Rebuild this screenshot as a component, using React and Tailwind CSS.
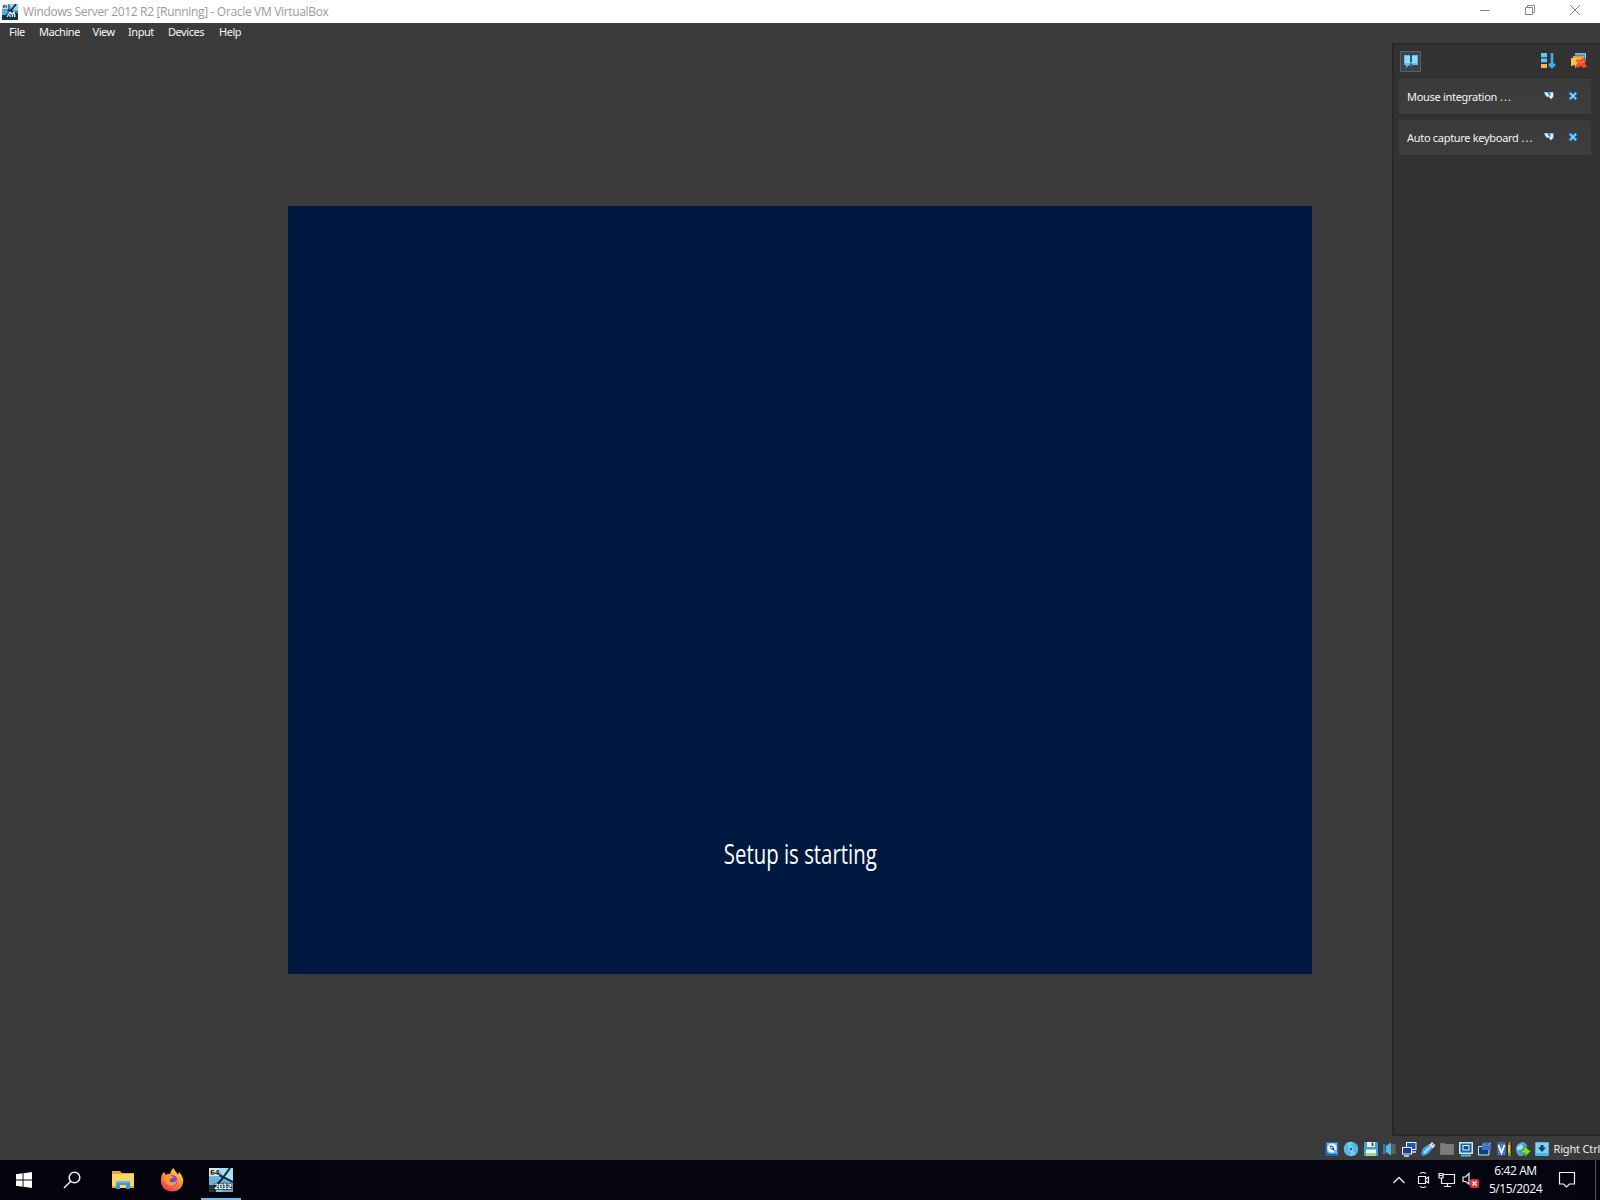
import React from "react";

const TRAY_TEXT = "font-['Open_Sans','Noto_Sans',sans-serif]";

function VmIcon({ className }) {
  return (
    <svg viewBox="0 0 24 24" className={className}>
      <rect width="24" height="24" fill="#7cc4e4" />
      <path d="M10 0H24V13L15 9Z" fill="#a9dff2" />
      <path d="M0 9L9 8L12 14L0 20Z" fill="#65b3d8" />
      <path d="M13 12L24 15V24H13Z" fill="#5aa9d2" />
      <path d="M0 17H7V24H0Z" fill="#26363c" />
      <path d="M10 7L24 14M21 0L13 11L5 20" stroke="#10283c" strokeWidth="2" fill="none" />
      <rect width="10" height="8" fill="#dfe9e6" />
      <text x="1" y="7" fontSize="7" fontWeight="700" fontFamily="DejaVu Sans" fill="#222">64</text>
      <text x="5" y="21" fontSize="7.5" fontWeight="700" fontFamily="DejaVu Sans" fill="#fff" stroke="#14222c" strokeWidth="1.2" paintOrder="stroke" textLength="18">2012</text>
    </svg>
  );
}

function TitleIcon() {
  return (
    <svg viewBox="0 0 16 16" className="size-4">
      <rect width="16" height="16" fill="#2e86b8" />
      <path d="M7 0H16V7L10 6Z" fill="#8fd3ee" />
      <path d="M0 5L6 6L4 11L0 12Z" fill="#4fb0d8" />
      <path d="M0 11H16V16H0Z" fill="#123650" />
      <path d="M14 0L8 8L3 14M6 6L16 11" stroke="#0b2438" strokeWidth="1.6" />
      <rect width="6" height="5" fill="#d8e3e2" />
      <path d="M1.5 1.5H3V3.500H1.500ZM4 1V3H5.500" stroke="#333" strokeWidth=".8" fill="none" />
      <path d="M5 13L8 8L10 10L12 8L13 13M8 13V11M10.500 13V11" stroke="#e8f6fc" strokeWidth="1.3" fill="none" />
    </svg>
  );
}

const STATUS_ICONS = [
  <g key="hdd">
    <rect x="1.500" y="1" width="13" height="14" rx="1" fill="#1c6fba" />
    <path d="M3 2H13V13H3Z" fill="#6cbcea" />
    <circle cx="8" cy="7" r="4.600" fill="#eef8fd" />
    <path d="M5.500 4.500L9 5L10.500 8.500L12 11L9 9L6.500 8Z" fill="#245a94" />
    <circle cx="7.500" cy="6.500" r="1.100" fill="#c3e5f6" />
    <path d="M3 12L5 13.500H12" stroke="#1a5da2" strokeWidth="1.500" fill="none" />
  </g>,
  <g key="disc">
    <circle cx="8" cy="8" r="7.300" fill="#52b6e6" />
    <path d="M8 8L3 2.700A7 7 0 0 1 9 1ZM8 8L13 13A7 7 0 0 1 7 15Z" fill="#72c9ef" />
    <circle cx="8" cy="8" r="2.500" fill="#8ad6f4" />
    <circle cx="8" cy="8" r="1.300" fill="#155d96" />
  </g>,
  <g key="floppy">
    <path d="M1 1H14L15 2V15H1Z" fill="#3e9fdb" />
    <rect x="4" y="1" width="8" height="5" fill="#eef8fc" />
    <rect x="8.500" y="1.500" width="2" height="3.500" fill="#1d5a91" />
    <rect x="3" y="8.500" width="10" height="6" fill="#f3faee" />
    <rect x="3" y="12" width="10" height="2.500" fill="#a5d87a" />
  </g>,
  <g key="audio">
    <path d="M1 3H3.500V13H1Z" fill="#2d7dbd" />
    <path d="M4 5L9 1.500V14.500L4 11Z" fill="#57b8ea" />
    <path d="M9 3H14V13H9Z" fill="#56595b" />
    <path d="M11 3V13" stroke="#6c6f70" />
  </g>,
  <g key="network">
    <rect x="5.500" y="1.500" width="9.500" height="7" fill="#1b58b4" stroke="#eaf2fb" />
    <rect x="1.500" y="6.500" width="9" height="6.500" fill="#173f8c" stroke="#eaf2fb" />
    <path d="M3 15H8M11 11H15" stroke="#dce9f6" strokeWidth="1.500" />
  </g>,
  <g key="usb">
    <path d="M1 13L3 7L9 3L13 7L8 13L3 15Z" fill="#3e9cdc" />
    <path d="M3 11L9 5L11 7L5 13Z" fill="#92d8f8" />
    <path d="M9 4L12 1L15.500 4.500L12.500 7.500Z" fill="#f0d9df" />
    <path d="M12 3L13.500 4.500" stroke="#9c5c72" />
  </g>,
  <g key="folder">
    <path d="M1 2H6L7 3H15V14H1Z" fill="#707070" />
    <path d="M2 3H14V13H2Z" fill="#7c7c7c" />
  </g>,
  <g key="display">
    <rect x="1" y="1" width="14" height="12" fill="#c6e8f8" />
    <rect x="2.500" y="2.500" width="11" height="9" fill="#1763a8" />
    <rect x="5" y="4.500" width="6" height="4.500" fill="#1c4f7d" stroke="#e8f6fc" />
    <path d="M3 14.500H13" stroke="#65b9e6" strokeWidth="2" />
  </g>,
  <g key="recording">
    <path d="M1.500 5.500H12V14H1.500Z" fill="#123f83" stroke="#d2e5f8" />
    <path d="M5 3L7 1.500H14V9H5Z" fill="#3f72c4" />
    <path d="M7 2V5M14 2L11 4" stroke="#7ba4e2" />
  </g>,
  <g key="cpu">
    <path d="M1 2H10V14H1Z" fill="#315fae" />
    <path d="M3 1V15M5.500 1V15M8 1V15" stroke="#8aabe0" strokeDasharray="1 1" />
    <path d="M2.500 4L5.500 12L8.500 4" stroke="#eef4fd" strokeWidth="2" fill="none" />
    <rect x="11" y="1" width="5" height="14" fill="#252923" />
    <rect x="12" y="1" width="2.500" height="14" fill="#d9ca28" />
    <rect x="12" y="1" width="2.500" height="3" fill="#c15a25" />
    <rect x="12" y="12" width="2.500" height="3" fill="#4fae35" />
  </g>,
  <g key="mouse">
    <path d="M1 8C1 3 5 1 9 1L12 4V10L8 15H4C2 13 1 11 1 8Z" fill="#4fa3d7" />
    <path d="M2 6L6 3L9 6L6 9H2Z" fill="#a0dcf5" />
    <path d="M6 9L9 9V5L15.500 10.500L10 15.500V12H6Z" fill="#8adc2d" stroke="#348b27" strokeWidth=".7" />
  </g>,
  <g key="keyboard">
    <rect x="1" y="1" width="14" height="14" rx="1" fill="#49b3e8" />
    <rect x="2" y="2" width="12" height="10" fill="#80d0f3" />
    <path d="M6.500 4H9.500V6.500H12L8 11L4 6.500H6.500Z" fill="#0c3c68" />
  </g>,
];

const MENU = [
  ["File", "w-[30px]"],
  ["Machine", "w-[53.500px]"],
  ["View", "w-[35.500px]"],
  ["Input", "w-[40px]"],
  ["Devices", "w-[51px]"],
  ["Help", "w-[40px]"],
];

function TitleBar() {
  return (
    <header className="flex h-[23px] shrink-0 items-center bg-white pl-[2px]">
      <TitleIcon />
      <h1 className="ml-[5px] mt-[1px] flex-1 whitespace-nowrap font-['Open_Sans','Noto_Sans',sans-serif] text-[12px] leading-4 tracking-[-0.330px] text-[#9b9b9b]">
        Windows Server 2012 R2 [Running] - Oracle VM VirtualBox
      </h1>
      <div className="flex items-center gap-[33.500px] pb-[4px] pr-[19px]">
        <svg viewBox="0 0 10 12" className="h-3 w-[10px]"><path d="M0 6.500H10" stroke="#8a8a8a" /></svg>
        <svg viewBox="0 0 12 12" className="size-3" fill="none" stroke="#858585">
          <path d="M1.500 3.500H8.500V10.500H1.500ZM3.500 3.500V1.500H10.500V8.500H8.500" />
        </svg>
        <svg viewBox="0 0 12 12" className="size-3"><path d="M1 1L11 11M11 1L1 11" stroke="#858585" /></svg>
      </div>
    </header>
  );
}

function Notice({ children }) {
  return (
    <div className="flex h-[35px] items-center bg-linear-to-b from-[#3a3a3a] to-[#3e3e3e] pl-[8px]">
      <span className="mt-[2px] flex w-[137px] gap-[3px] whitespace-nowrap font-['Noto_Sans','Open_Sans',sans-serif] text-[11px] text-[#f4f4f4]">
        <span className="tracking-[-0.300px]">{children}</span>
        <span className="tracking-[1px]">...</span>
      </span>
      <svg viewBox="0 0 10 10" className="mb-[2px] size-[10px]">
        <path d="M0 1H4L5 2L6 1H9.500V6L7 8.500L5 6L3 6L1 4Z" fill="#6ebee9" />
        <path d="M1.500 2L4.500 5M8 2V5L6 7" stroke="#f6fcff" strokeWidth="1.800" fill="none" />
        <path d="M4 2L6 4" stroke="#1a5a8e" />
      </svg>
      <svg viewBox="0 0 10 10" className="mb-[2px] ml-[14px] size-[10px]">
        <path d="M1.500 1.500L8.500 8.500M8.500 1.500L1.500 8.500" stroke="#1d76b8" strokeWidth="3.200" />
        <path d="M2 2L8 8M8 2L2 8" stroke="#8ad8ff" strokeWidth="1.700" />
      </svg>
    </div>
  );
}

function NotificationCenter() {
  return (
    <aside className="flex w-[208px] shrink-0 flex-col border-b-2 border-l-2 border-t-2 border-[#282828] bg-[#323232] pl-[5px] pr-[9px]">
      <div className="flex h-[34px] items-center pb-[2px] pl-[1px]">
        <div className="flex size-[21px] items-center justify-center border border-[#5c6058] bg-[#39474d]">
          <svg viewBox="0 0 16 16" className="size-4">
            <path d="M1 2H7L8 3L9 2H15V12H9L8 13L6 12L3 15V12H1Z" fill="#5ebcf0" />
            <path d="M2 3H7V10H2ZM9 3H14V10H9Z" fill="#91dcff" />
            <path d="M8 2V9M8 10.500V12" stroke="#143849" strokeWidth="1.500" />
          </svg>
        </div>
        <svg viewBox="0 0 16 16" className="ml-[119px] size-4">
          <path d="M1 0H7V4H1ZM1 5.500H7V9H1Z" fill="#68c6f6" />
          <path d="M1 4.500H7M1 9.500H7" stroke="#1769a6" />
          <path d="M1 11H7V15H1Z" fill="#f4b54d" />
          <path d="M12 0V14M9 11L12 14L15 11" stroke="#42aceb" strokeWidth="2.600" fill="none" />
        </svg>
        <svg viewBox="0 0 18 16" className="ml-[14px] h-4 w-[18px]">
          <path d="M5 0H16V8H13V3H5Z" fill="#388bc4" />
          <path d="M5 1H15.500V5" stroke="#a0dcf5" fill="none" />
          <path d="M3 3H14V12H3Z" fill="#ef9c32" />
          <path d="M1 5H12V12L9 11L5 15V12L1 13Z" fill="#f7c34e" />
          <path d="M7 6L10 7L13 5L16 8L15 10L17 14L13 15L11 13L7 15L6 12L8 10L6 8Z" fill="#ef4f28" />
          <path d="M8 8L11 10L14 8" stroke="#ff9964" fill="none" />
        </svg>
      </div>
      <div className="flex flex-col gap-[6px]">
        <Notice>Mouse integration</Notice>
        <Notice>Auto capture keyboard</Notice>
      </div>
    </aside>
  );
}

function Taskbar() {
  return (
    <footer className="flex h-10 shrink-0 items-stretch bg-linear-to-r from-[#02030b] via-[#090612] to-[#030410] text-white">
      <div className="flex w-12 items-center justify-center">
        <svg viewBox="0 0 16 16" className="size-4" fill="#fff">
          <path d="M0 2.300L6.600 1.300V7.500H0ZM7.500 1.200L16 0V7.500H7.500ZM0 8.500H6.600V14.700L0 13.700ZM7.500 8.500H16V16L7.500 14.800Z" />
        </svg>
      </div>
      <div className="flex w-12 items-center justify-center">
        <svg viewBox="0 0 18 18" className="size-[18px]" fill="none" stroke="#f2f2f2" strokeWidth="1.500">
          <circle cx="11.500" cy="6.500" r="5.300" /><path d="M7.700 10.300L1 17" />
        </svg>
      </div>
      <div className="flex w-[53px] items-center justify-center">
        <svg viewBox="0 0 22 20" className="h-5 w-[22px]">
          <path d="M0 1H8L10 3H22V18H0Z" fill="#e4a72f" />
          <path d="M0 4H22V18H0Z" fill="#fbd668" />
          <path d="M4 11H18V19H14V15H8V19H4Z" fill="#3a96d4" />
          <path d="M4 11H18V13H4Z" fill="#62b8e9" />
          <path d="M0 17H4M18 17H22" stroke="#e0a937" strokeWidth="2" />
        </svg>
      </div>
      <div className="flex w-[46px] items-center justify-center">
        <svg viewBox="0 0 24 24" className="size-6">
          <defs>
            <linearGradient id="fox" x1=".8" y1="0" x2=".3" y2="1">
              <stop offset="0" stopColor="#ffe24b" /><stop offset=".45" stopColor="#ff9630" /><stop offset="1" stopColor="#ef335f" />
            </linearGradient>
          </defs>
          <path d="M4 4L6 7C8 5 9 6 10 6C11 3 12 1 14 0C14 3 17 4 18 7L19 4C22 7 24 11 23 15C22 20 18 23.500 12 23.500C5 23.500 0 18 1 11C1 8 2 6 4 4Z" fill="url(#fox)" />
          <circle cx="12" cy="12.500" r="5.500" fill="#8846c4" />
          <path d="M5 8C8 6 12 7 14 10L11 11C9 11 9 13 11 14C14 15 16 13 17 12C17 18 10 20 6 15C4 12 4 10 5 8Z" fill="#ff9b2c" />
          <path d="M10 11.500C12 9 15 10 15.500 12C15 14.500 12 15 10 13Z" fill="#6750c7" />
        </svg>
      </div>
      <div className="ml-[6px] flex w-10 flex-col items-center justify-end">
        <VmIcon className="mb-[6px] size-6" />
        <div className="h-[2px] w-full bg-[#76b9ed]" />
      </div>
      <div className="flex-1" />
      <div className="flex items-center">
        <svg viewBox="0 0 14 14" className="size-[14px]" fill="none" stroke="#eee" strokeWidth="1.300"><path d="M1.500 10L7 4.500L12.500 10" /></svg>
        <svg viewBox="0 0 14 18" className="ml-[11px] h-[18px] w-[14px]" fill="none" stroke="#eee" strokeWidth="1.200">
          <path d="M1.500 5.500H8.500V12.500H1.500ZM8.500 8L11.500 6V12L8.500 10M3 2.500Q6 .500 9 2.500M3 15.500Q6 17.500 9 15.500" />
        </svg>
        <svg viewBox="0 0 18 16" className="ml-[7px] h-4 w-[18px]" fill="none" stroke="#eee" strokeWidth="1.200">
          <path d="M5 2.500H16.500V11.500H3.500V6M9.500 12V15M6 14.500H13M1 1.500H5V6H1ZM1 3.500H5" />
        </svg>
        <svg viewBox="0 0 18 18" className="ml-[6px] h-[18px] w-[18px]">
          <path d="M1 6H3.500L7 2.500V13L3.500 10.500H1Z" fill="none" stroke="#eee" strokeWidth="1.200" />
          <rect x="8" y="8" width="9" height="9" rx="2" fill="#d5333c" />
          <path d="M10.500 10.500L14.500 14.500M14.500 10.500L10.500 14.500" stroke="#fff" strokeWidth="1.300" />
        </svg>
      </div>
      <div className={`${TRAY_TEXT} flex w-[71px] flex-col items-center justify-center whitespace-nowrap text-[12px] leading-[18px] tracking-[-0.400px]`}>
        <span>6:42 AM</span>
        <span>5/15/2024</span>
      </div>
      <div className="flex w-[32px] items-center justify-center">
        <svg viewBox="0 0 18 18" className="size-[18px]" fill="none" stroke="#f2f2f2" strokeWidth="1.200"><path d="M1.500 1.500H16.500V13H11.500L8.500 16L5.500 13H1.500Z" /></svg>
      </div>
      <div className="ml-[12px] mr-[4px] w-px bg-[#555762]" />
    </footer>
  );
}

export default function App() {
  return (
    <div className="flex h-[1200px] w-[1600px] flex-col overflow-hidden bg-[#3b3b3b]">
      <TitleBar />
      <nav className="flex h-[20px] shrink-0 items-start pl-[9px] font-['Noto_Sans','Open_Sans',sans-serif] text-[11px] leading-[18px] tracking-[-0.450px] text-[#f7f7f7]">
        {MENU.map(([label, width]) => <span key={label} className={width}>{label}</span>)}
      </nav>
      <div className="flex h-[1093px] shrink-0">
        <main className="flex-1 pl-[288px] pt-[163px]">
          <section className="flex h-[768px] w-[1024px] items-end justify-center bg-[#001940] pb-[100px]">
            <p className="origin-center scale-x-[0.755] whitespace-nowrap font-['Open_Sans','Noto_Sans',sans-serif] text-[27px] leading-[40px] text-white">Setup is starting</p>
          </section>
        </main>
        <NotificationCenter />
      </div>
      <div className="flex h-6 shrink-0 items-center justify-end gap-[3.100px] border-t border-[#393939]">
        {STATUS_ICONS.map((icon) => <svg key={icon.key} viewBox="0 0 16 16" className="size-4 shrink-0">{icon}</svg>)}
        <span className="mt-[2px] w-[46.500px] whitespace-nowrap font-['Noto_Sans','Open_Sans',sans-serif] text-[11px] tracking-[-0.170px] text-[#f0f0f0]">Right Ctrl</span>
      </div>
      <Taskbar />
    </div>
  );
}
